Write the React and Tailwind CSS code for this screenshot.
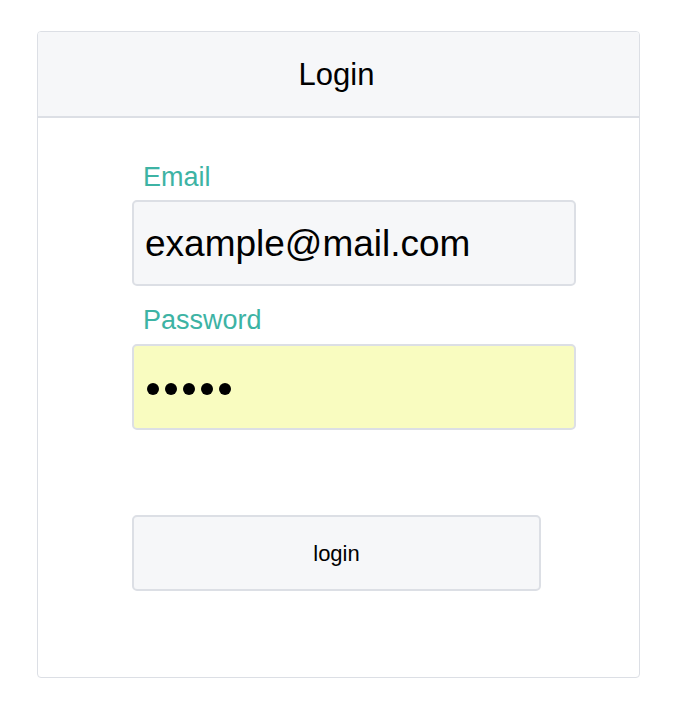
export default function App() {
  return (
    <div
      className="min-h-[702px] bg-white pl-[37px] pt-[31px]"
      style={{ fontFamily: '"Liberation Sans", Arial, sans-serif' }}
    >
      <div className="w-[603px] h-[647px] border border-[#dcdfe5] rounded-[4px] overflow-hidden">
        {/* HEADER */}
        <div className="h-[86px] bg-[#f6f7f9] border-b-2 border-[#dcdfe5] flex items-center justify-center">
          <h2 className="text-[31px] leading-none text-black pr-[4px]">Login</h2>
        </div>

        {/* FORM */}
        <div className="pl-[94px] pt-[44px]">
          <label className="block pl-[11px] text-[27px] leading-[31px] text-[#3db3a4] mb-[7px]">
            Email
          </label>
          <div className="w-[444px] h-[86px] bg-[#f6f7f9] border-2 border-[#dcdfe5] rounded-[5px] flex items-center pl-[11px]">
            <span className="text-[37px] leading-none text-black">
              example@mail.com
            </span>
          </div>

          <label className="block pl-[11px] text-[27px] leading-[31px] text-[#3db3a4] mt-[19px] mb-[8px]">
            Password
          </label>
          <div className="w-[444px] h-[86px] bg-[#f9fcc0] border-2 border-[#dcdfe5] rounded-[5px] flex items-center pl-[13px] pt-[3px] gap-[6px]">
            <span className="w-[12px] h-[12px] rounded-full bg-black" />
            <span className="w-[12px] h-[12px] rounded-full bg-black" />
            <span className="w-[12px] h-[12px] rounded-full bg-black" />
            <span className="w-[12px] h-[12px] rounded-full bg-black" />
            <span className="w-[12px] h-[12px] rounded-full bg-black" />
          </div>

          <button className="mt-[85px] w-[409px] h-[76px] bg-[#f6f7f9] border-2 border-[#dcdfe5] rounded-[5px] text-[22px] text-black">
            login
          </button>
        </div>
      </div>
    </div>
  );
}
